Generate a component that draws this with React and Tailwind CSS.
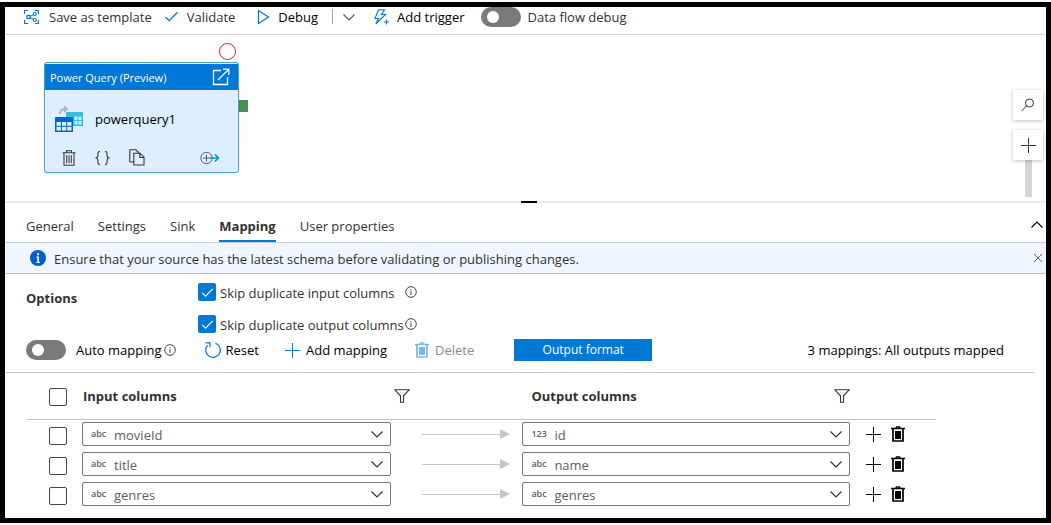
import { useState } from "react";

const rows = [
  { input: "movieId", inputType: "abc", output: "id", outputType: "123" },
  { input: "title", inputType: "abc", output: "name", outputType: "abc" },
  { input: "genres", inputType: "abc", output: "genres", outputType: "abc" },
];

const tabs = ["General", "Settings", "Sink", "Mapping", "User properties"];

function TemplateIcon() {
  return (
    <svg width="15" height="16" viewBox="0 0 15 16" fill="none" stroke="#0078d4" className="shrink-0">
      <path d="M.5 5V1.5H4M11 1.500h3.500V5M14.500 11v3.500H11M4 14.500H.5V11" strokeWidth="1.200" />
      <rect x="3" y="6.500" width="3" height="3" strokeWidth="1.200" />
      <circle cx="10.800" cy="5" r="1.500" strokeWidth="1.200" />
      <circle cx="10.800" cy="11" r="1.500" strokeWidth="1.200" />
      <path d="M6 7.500 9.500 5.600M6 8.500l3.500 2" />
    </svg>
  );
}

function Check({ size, color }) {
  return (
    <svg width={size} height={size} viewBox="0 0 16 16" fill="none" stroke={color} strokeWidth="1.3" className="shrink-0">
      <path d="M1.5 8.5 5.5 12.5 14.5 3.5" />
    </svg>
  );
}

function Chevron({ up = false, color = "#323130", className = "" }) {
  return (
    <svg width="14" height="8" viewBox="0 0 14 8" fill="none" stroke={color} strokeWidth="1.2" className={`shrink-0 ${className}`}>
      <path d={up ? "M1.5 6.5 7 1l5.5 5.5" : "M1.5 1.5 7 7l5.5-5.5"} />
    </svg>
  );
}

function Plus({ color }) {
  return (
    <svg width="15" height="15" viewBox="0 0 15 15" stroke={color} className="shrink-0">
      <path d="M7.5 0v15M0 7.5h15" />
    </svg>
  );
}

function SolidTrash({ color }) {
  return (
    <svg width="14" height="16" viewBox="0 0 14 16" fill="none" stroke={color} className="shrink-0">
      <path d="M0 2.5h14M4.5 2.5l1-1.700h3l1 1.700" strokeWidth="1.3" />
      <path d="M2 3v12h10V3" strokeWidth="1.700" />
      <path d="M4 5h6v8H4z" fill={color} stroke="none" />
    </svg>
  );
}

function Info() {
  return (
    <svg width="12" height="12" viewBox="0 0 12 12" fill="none" stroke="#323130" strokeWidth="0.9" className="shrink-0">
      <circle cx="6" cy="6" r="5.300" />
      <path d="M6 3v1M6 4.800v4.200" />
    </svg>
  );
}

function Filter() {
  return (
    <svg width="16" height="14" viewBox="0 0 16 14" fill="none" stroke="#323130" strokeWidth="1.1">
      <path d="M.8.8h14.4L9.5 6.8v6.4h-3V6.8z" />
    </svg>
  );
}

function Toggle({ label }) {
  const [on, setOn] = useState(false);
  return (
    <button
      type="button"
      role="switch"
      aria-checked={on}
      aria-label={label}
      onClick={() => setOn(!on)}
      className={`flex h-5 w-10 shrink-0 items-center rounded-full px-1.5 ${on ? "justify-end bg-[#0078d4]" : "bg-[#7a7a7a]"}`}
    >
      <span className="size-3 rounded-full bg-white" />
    </button>
  );
}

function EmptyBox({ label }) {
  return (
    <input
      type="checkbox"
      aria-label={label}
      className="block size-[18px] appearance-none rounded-[2px] border border-[#484644] bg-white checked:bg-[#0078d4]"
    />
  );
}

function SkipOption({ children }) {
  return (
    <div className="flex items-center">
      <label className="flex items-center gap-1">
        <span className="grid size-[18px] place-items-center">
          <input
            type="checkbox"
            defaultChecked
            className="peer col-start-1 row-start-1 size-[18px] appearance-none rounded-[2px] border border-[#0078d4] checked:bg-[#0078d4]"
          />
          <span className="pointer-events-none col-start-1 row-start-1 hidden peer-checked:block">
            <Check size={13} color="#fff" />
          </span>
        </span>
        <span className="h-5 w-[185px] pt-px whitespace-nowrap">{children}</span>
      </label>
      <Info />
    </div>
  );
}

function ColumnSelect({ type, value, label }) {
  return (
    <div className="grid h-6 items-center rounded-[2px] border border-[#7a7876] bg-white">
      <span className="pointer-events-none col-start-1 row-start-1 pl-2 text-[9px] leading-4 font-semibold text-[#605e5c]">{type}</span>
      <select
        aria-label={label}
        defaultValue={value}
        className="col-start-1 row-start-1 h-[22px] w-full appearance-none bg-transparent pt-0.5 pl-[31px] text-[13px] leading-5 text-[#605e5c]"
      >
        <option>{value}</option>
      </select>
      <Chevron className="pointer-events-none col-start-1 row-start-1 mr-1.5 justify-self-end" />
    </div>
  );
}

function Arrow() {
  return (
    <svg width="88" height="10" viewBox="0 0 88 10" className="block">
      <path d="M0 5.5h79" stroke="#c8c6c4" />
      <path d="M78 0v10l10-5z" fill="#c8c6c4" />
    </svg>
  );
}

function Toolbar() {
  return (
    <div className="flex h-7 items-start border-b border-[#d6d6d6] pl-[19px] whitespace-nowrap">
      <div className="flex h-[19px] items-center">
        <button type="button" className="flex items-center gap-2.5"><TemplateIcon />Save as template</button>
        <button type="button" className="ml-3 flex items-center gap-2"><Check size={15} color="#0078d4" />Validate</button>
        <button type="button" className="ml-[22px] flex items-center gap-2 text-black">
          <svg width="13" height="16" viewBox="0 0 13 16" fill="none" stroke="#0078d4" strokeWidth="1.2"><path d="M1.5 1.5v13L11.5 8z" /></svg>
          Debug
        </button>
        <span className="ml-3.5 h-[15px] w-px bg-[#a6a6a6]" />
        <button type="button" aria-label="Debug options" className="ml-[9px]"><Chevron color="#605e5c" /></button>
        <button type="button" className="ml-[18px] flex items-center gap-2 text-black">
          <svg width="15" height="16" viewBox="0 0 15 16" fill="none" stroke="#0078d4" strokeWidth="1.1">
            <path d="M4.500.8h6L7.5 5.500h4L1.800 15l2.700-5.500H1z" /><path d="M12.500 10.5v5M10 13h5" />
          </svg>
          Add trigger
        </button>
        <div className="ml-4 flex items-center gap-[7px]"><Toggle label="Data flow debug" /><span>Data flow debug</span></div>
      </div>
    </div>
  );
}

function ActivityNode() {
  return (
    <div className="absolute top-[27px] left-[39px] w-[195px] overflow-hidden rounded-[3px] border border-[#4da3bd] bg-[#dceeff] shadow-sm">
      <div className="mt-px flex h-[26px] items-center justify-between bg-[#0078d7] pr-2 pl-[5px] text-[11px] text-white">
        <span className="pt-0.5">Power Query (Preview)</span>
        <button type="button" aria-label="Open power query">
          <svg width="18" height="18" viewBox="0 0 18 18" fill="none" stroke="#fff" strokeWidth="1.3">
            <path d="M9 2.5H1.5v14h14V9M6 12 16.5 1.5M11 1.2h5.8V7" />
          </svg>
        </button>
      </div>
      <div className="flex h-[58px] items-center gap-3 pl-[10px] text-[13px] text-black">
        <svg width="28" height="28" viewBox="0 0 28 28">
          <path d="M4.800 9C4.800 5.500 6.500 4 10.500 4M9 1.200 12 4 9 6.800" fill="none" stroke="#b3b3b3" strokeWidth="1.8" />
          <rect x="11" y="7" width="17" height="14" rx=".5" fill="#32bedd" />
          <path d="M19.500 11.500h3v3.500h-3zM23.500 11.500h3v3.500h-3zM19.500 16h3v3.500h-3zM23.500 16h3v3.500h-3z" fill="#c3f1ff" />
          <rect x="0" y="12" width="18" height="15" rx=".5" fill="#0066c8" />
          <path d="M1.500 17H6v3.700H1.500zM7 17h4.200v3.700H7zM12.200 17h4.300v3.700h-4.300zM1.500 21.700H6v3.700H1.500zM7 21.700h4.200v3.700H7zM12.200 21.700h4.300v3.700h-4.300z" fill="#dceeff" />
        </svg>
        powerquery1
      </div>
      <div className="flex h-[24px] items-end gap-[18px] pr-[18px] pb-[6px] pl-[17px]">
        <button type="button" aria-label="Delete activity">
          <svg width="14" height="16" viewBox="0 0 14 16" fill="none" stroke="#3b3a39" strokeWidth="1.1" className="block">
            <path d="M.5 2.8h13M4.5 2.8V.8h5v2M2 3v12.3h10V3M4.7 5.2v8M7 5.2v8M9.3 5.2v8" />
          </svg>
        </button>
        <button type="button" aria-label="Show code">
          <svg width="17" height="16" viewBox="0 0 17 16" fill="none" stroke="#3b3a39" strokeWidth="1.1" className="block">
            <path d="M6 1.500C3.500 1.500 4 3 4 5S3.500 8 1.500 8C3.500 8 4 9 4 11s-.5 3.500 2 3.500M11 1.500c2.500 0 2 1.500 2 3.500s.5 3 2.500 3c-2 0-2.500 1-2.500 3s.5 3.500-2 3.500" />
          </svg>
        </button>
        <button type="button" aria-label="Copy activity">
          <svg width="16" height="17" viewBox="0 0 16 17" fill="none" stroke="#3b3a39" strokeWidth="1.1" className="block">
            <path d="M4.500 13H.8V.8h6L10 4M4.800 4.200H11l4 4V16H4.800zM10.800 4.500v4H15" />
          </svg>
        </button>
        <button type="button" aria-label="Add output" className="ml-auto">
          <svg width="20" height="16" viewBox="0 0 20 16" fill="none" className="block">
            <circle cx="6.500" cy="8" r="5.700" stroke="#605e5c" />
            <path d="M6.500 4.500v7M3 8h7" stroke="#605e5c" />
            <path d="M10 8h8.500M15 4.500 18.500 8 15 11.500" stroke="#0099c6" strokeWidth="1.600" />
          </svg>
        </button>
      </div>
    </div>
  );
}

function Canvas() {
  return (
    <div className="relative h-[166px] overflow-hidden">
      <span className="absolute top-2 left-[214px] size-[17px] rounded-full border border-[#f01020]" />
      <span className="absolute top-[65px] left-[234px] h-3 w-[9px] bg-[#47904f]" />
      <ActivityNode />
      <div className="absolute top-[55px] right-[3px] flex w-[30px] flex-col items-center">
        <button type="button" aria-label="Search canvas" className="grid size-[30px] place-items-center bg-white shadow-[0_1px_4px_rgba(0,0,0,0.25)]">
          <svg width="14" height="14" viewBox="0 0 14 14" fill="none" stroke="#323130"><circle cx="8.500" cy="5" r="4" /><path d="M5.600 7.900.8 12.900" /></svg>
        </button>
        <button type="button" aria-label="Zoom in" className="relative mt-2.5 grid size-[30px] place-items-center bg-white shadow-[0_1px_4px_rgba(0,0,0,0.25)]"><Plus color="#323130" /></button>
        <span className="h-[37px] w-[7px] bg-[#d6d6d6]" />
      </div>
    </div>
  );
}

export default function App() {
  const [active, setActive] = useState("Mapping");
  return (
    <div className="bg-white py-0.5">
      <main className="overflow-hidden border-[5px] border-black bg-white font-['Open_Sans','Noto_Sans',sans-serif] text-[13px] leading-5 text-[#323130]">
        <Toolbar />
        <Canvas />
        <div className="flex h-0.5 justify-center bg-[#ededed]"><span className="ml-1.5 h-0.5 w-4 bg-black" /></div>

        <div className="flex h-10 items-end border-b border-[#c8ccd4] pr-0.5 pl-[21px]">
          <div role="tablist" className="flex gap-6">
            {tabs.map((tab) => (
              <button
                key={tab}
                type="button"
                role="tab"
                aria-selected={tab === active}
                onClick={() => setActive(tab)}
                className={`h-[27px] border-b-2 pb-1 whitespace-nowrap ${tab === active ? "border-[#0078d4] font-bold" : "border-transparent"}`}
              >
                {tab}
              </button>
            ))}
          </div>
          <button type="button" aria-label="Collapse panel" className="mb-[13px] ml-auto"><Chevron up color="#000" /></button>
        </div>

        <div className="flex h-[31px] items-center gap-2 border-b border-[#bfbfc4] bg-[#f0f6ff] pr-[3px] pl-[25px]">
          <svg width="16" height="16" viewBox="0 0 16 16" className="shrink-0">
            <circle cx="8" cy="8" r="8" fill="#015cda" />
            <path d="M6.300 6.500H9V12h1v1H6.300v-1h1V7.500h-1zM7 3h2v2.300H7z" fill="#fff" />
          </svg>
          <p className="pt-0.5">Ensure that your source has the latest schema before validating or publishing changes.</p>
          <button type="button" aria-label="Dismiss message" className="ml-auto">
            <svg width="10" height="10" viewBox="0 0 10 10" stroke="#605e5c"><path d="m1 1 8 8M9 1 1 9" /></svg>
          </button>
        </div>

        <section className="flex pt-2 pl-[21px]">
          <h2 className="w-[172px] pt-1.5 font-bold">Options</h2>
          <div className="flex flex-col gap-3">
            <SkipOption>Skip duplicate input columns</SkipOption>
            <SkipOption>Skip duplicate output columns</SkipOption>
          </div>
        </section>

        <div className="mr-3 flex h-[39px] items-center border-b border-[#c8c6c4] pr-[30px] pb-1.5 pl-[21px] whitespace-nowrap text-black">
          <Toggle label="Auto mapping" />
          <span className="ml-2.5">Auto mapping</span>
          <span className="ml-0.5"><Info /></span>
          <button type="button" className="ml-7 flex items-center gap-1">
            <svg width="18" height="18" viewBox="0 0 18 18" fill="none" stroke="#0078d4" strokeWidth="1.200"><path d="M11.500 2.200a7.300 7.300 0 1 1-7.800 1.900M1.500 1.800H6v4.400" /></svg>
            Reset
          </button>
          <button type="button" className="ml-[26px] flex items-center gap-1.5"><Plus color="#0078d4" />Add mapping</button>
          <button type="button" disabled className="ml-7 flex items-center gap-1.5 text-[#8a8886]"><SolidTrash color="#7ab8e8" />Delete</button>
          <button type="button" className="ml-10 h-[22px] w-[138px] bg-[#0078d4] text-[12px] text-white">Output format</button>
          <span className="ml-auto">3 mappings: All outputs mapped</span>
        </div>

        <div className="pb-[9px] pl-[21px]">
          <table className="w-full max-w-[910px] table-fixed border-collapse">
            <colgroup>
              <col className="w-14" />
              <col className="w-[34%]" />
              <col className="w-[131px]" />
              <col />
              <col className="w-[86px]" />
            </colgroup>
            <thead>
              <tr className="h-[46px] border-b border-[#c8c6c4] text-left">
                <th className="pt-0.5 pl-[23px]"><EmptyBox label="Select all mappings" /></th>
                <th className="pl-px font-bold">Input columns</th>
                <th className="pl-[3px]"><button type="button" aria-label="Filter input columns" className="block"><Filter /></button></th>
                <th className="pl-[9px] font-bold">
                  <div className="flex items-center justify-between">Output columns<button type="button" aria-label="Filter output columns"><Filter /></button></div>
                </th>
                <th aria-label="Actions" />
              </tr>
            </thead>
            <tbody>
              {rows.map((row) => (
                <tr key={row.input} className="h-[30px]">
                  <td className="pt-1 pl-[23px]"><EmptyBox label={`Select ${row.input}`} /></td>
                  <td><ColumnSelect type={row.inputType} value={row.input} label={`Input column ${row.input}`} /></td>
                  <td className="pl-[31px]"><Arrow /></td>
                  <td><ColumnSelect type={row.outputType} value={row.output} label={`Output column ${row.output}`} /></td>
                  <td>
                    <div className="flex items-center gap-2.5 pl-4">
                      <button type="button" aria-label="Add mapping row"><Plus color="#000" /></button>
                      <button type="button" aria-label="Delete mapping row"><SolidTrash color="#000" /></button>
                    </div>
                  </td>
                </tr>
              ))}
            </tbody>
          </table>
        </div>
      </main>
    </div>
  );
}
